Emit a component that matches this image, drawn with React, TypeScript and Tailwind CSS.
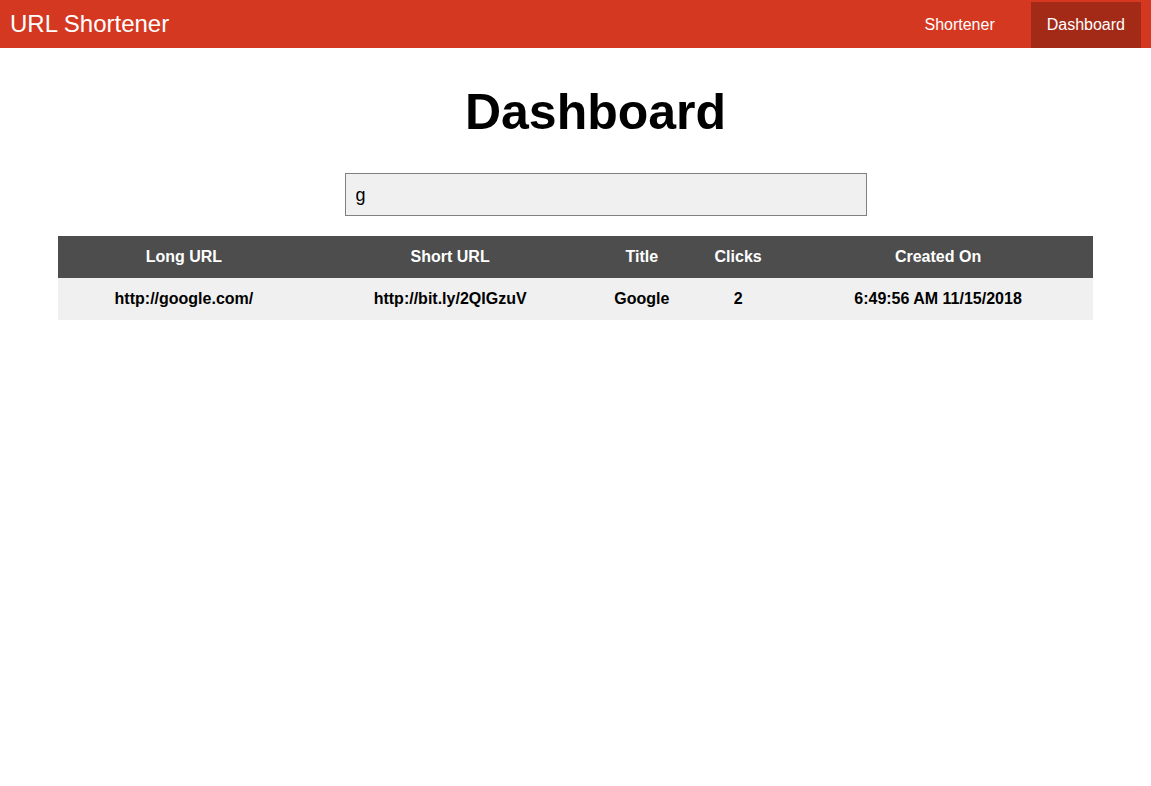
import { useState } from "react";

const links = [
  {
    longUrl: "http://google.com/",
    shortUrl: "http://bit.ly/2QIGzuV",
    title: "Google",
    clicks: 2,
    createdOn: "6:49:56 AM 11/15/2018",
  },
];

function Header() {
  return (
    <header className="flex h-12 items-center justify-between bg-[#d53821] px-2.5 text-white">
      <a href="#" className="text-2xl">
        URL Shortener
      </a>
      <nav className="flex gap-5 self-stretch pt-0.5">
        <a href="#shortener" className="flex items-center px-4">
          Shortener
        </a>
        <a
          href="#dashboard"
          aria-current="page"
          className="flex items-center bg-[#a32a17] px-4"
        >
          Dashboard
        </a>
      </nav>
    </header>
  );
}

function LinkTable({ rows }: { rows: typeof links }) {
  return (
    <table className="mx-auto mt-5 w-[90%] table-fixed border-collapse text-center font-bold">
      <colgroup>
        <col className="w-[24.4%]" />
        <col className="w-[27%]" />
        <col className="w-[10%]" />
        <col className="w-[8.6%]" />
        <col className="w-[30%]" />
      </colgroup>
      <thead>
        <tr className="bg-[#4d4d4d] text-white">
          <th className="py-[9px]">Long URL</th>
          <th>Short URL</th>
          <th>Title</th>
          <th>Clicks</th>
          <th>Created On</th>
        </tr>
      </thead>
      <tbody>
        {rows.map((row) => (
          <tr key={row.shortUrl} className="bg-[#f0f0f0]">
            <td className="py-[9px]">
              <a href={row.longUrl}>{row.longUrl}</a>
            </td>
            <td>
              <a href={row.shortUrl}>{row.shortUrl}</a>
            </td>
            <td>{row.title}</td>
            <td>{row.clicks}</td>
            <td>{row.createdOn}</td>
          </tr>
        ))}
      </tbody>
    </table>
  );
}

export default function App() {
  const [query, setQuery] = useState("g");
  const q = query.toLowerCase();
  const rows = links.filter(
    (l) => l.longUrl.includes(q) || l.title.toLowerCase().includes(q),
  );

  return (
    <div className="min-h-screen bg-white font-['Liberation_Sans',Arial,sans-serif] text-base text-black">
      <Header />
      <main>
        <h1 className="pt-[34px] pl-10 text-center text-[50px] leading-[60px] font-bold">
          Dashboard
        </h1>
        <div className="mt-[31px] flex justify-center pl-[60px]">
          <input
            type="text"
            aria-label="Search links"
            value={query}
            onChange={(e) => setQuery(e.target.value)}
            className="w-full max-w-[522px] border border-[#808080] bg-[#f0f0f0] px-2.5 pt-[8px] pb-[6px] text-lg leading-[27px] outline-none"
          />
        </div>
        <LinkTable rows={rows} />
      </main>
    </div>
  );
}
